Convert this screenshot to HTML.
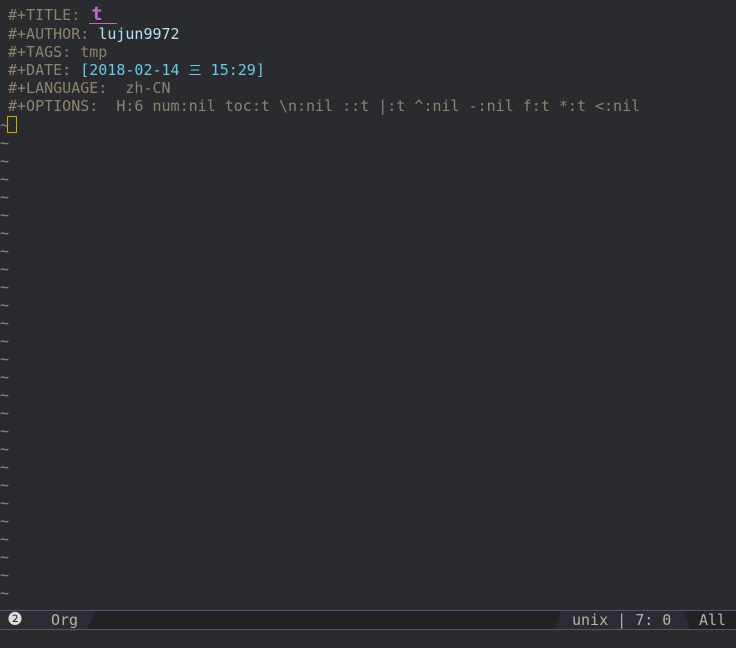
<!DOCTYPE html>
<html><head><meta charset="utf-8"><style>
html,body{margin:0;padding:0;background:#292b2e;width:736px;height:648px;overflow:hidden}
body{font-family:"DejaVu Sans Mono","Liberation Mono","Noto Sans CJK SC",monospace;font-size:15px;color:#b2b2b2;position:relative}
.l{position:absolute;left:8px;height:18px;line-height:18px;white-space:pre}
.k{color:#8f8270}
.a{color:#b8e2f2}
.d{color:#6cc9ea}
.t{position:absolute;left:0;height:18px;line-height:18px;color:#8a8a8a}
.ml{position:absolute;left:0;top:610px;width:736px;height:18px;background:#222226;border-top:1px solid #5d4d7a;border-bottom:1px solid #5d4d7a;font-size:14px;color:#b2b2b2;line-height:18px}
.seg{position:absolute;top:0;height:18px;background:#2b2c31}
</style></head><body>
<div class="l" style="top:6px"><span class="k">#+TITLE: </span><span style="color:#bc6ec5;font-weight:bold;font-size:19px;border-bottom:1px solid #bc6ec5;display:inline-block;width:26px;line-height:17px;padding-left:2px">t</span></div>
<div class="l" style="top:25px"><span class="k">#+AUTHOR: </span><span class="a">lujun9972</span></div>
<div class="l" style="top:43px"><span class="k">#+TAGS: tmp</span></div>
<div class="l" style="top:61px"><span class="k">#+DATE: </span><span class="d">[2018-02-14 </span><span class="d" style="font-size:13px">三</span><span class="d"> 15:29]</span></div>
<div class="l" style="top:79px"><span class="k">#+LANGUAGE:  zh-CN</span></div>
<div class="l" style="top:97px"><span class="k">#+OPTIONS:  H:6 num:nil toc:t \n:nil ::t |:t ^:nil -:nil f:t *:t &lt;:nil</span></div>
<div style="position:absolute;left:7px;top:116px;width:8px;height:15px;border:1px solid #e0a000"></div>
<div id="tl"></div>
<div class="ml">
<div class="seg" style="left:0;width:95px;clip-path:polygon(0 0,100% 0,92% 100%,0 100%)"></div>
<div class="seg" style="left:555px;width:135px;clip-path:polygon(4% 0,95% 0,100% 100%,0 100%)"></div>
<span style="position:absolute;left:8px;top:0;color:#ddd">➋</span>
<span style="position:absolute;left:51px;top:0;font-size:15px">Org</span>
<span style="position:absolute;left:572px;top:0;font-size:15px">unix | 7: 0</span>
<span style="position:absolute;left:699px;top:0;font-size:15px">All</span>
</div>
<script>
var h='';for(var i=0;i<27;i++){h+='<div class="t" style="top:'+(116+i*18)+'px">~</div>';}
document.getElementById('tl').innerHTML=h;
</script>
</body></html>
